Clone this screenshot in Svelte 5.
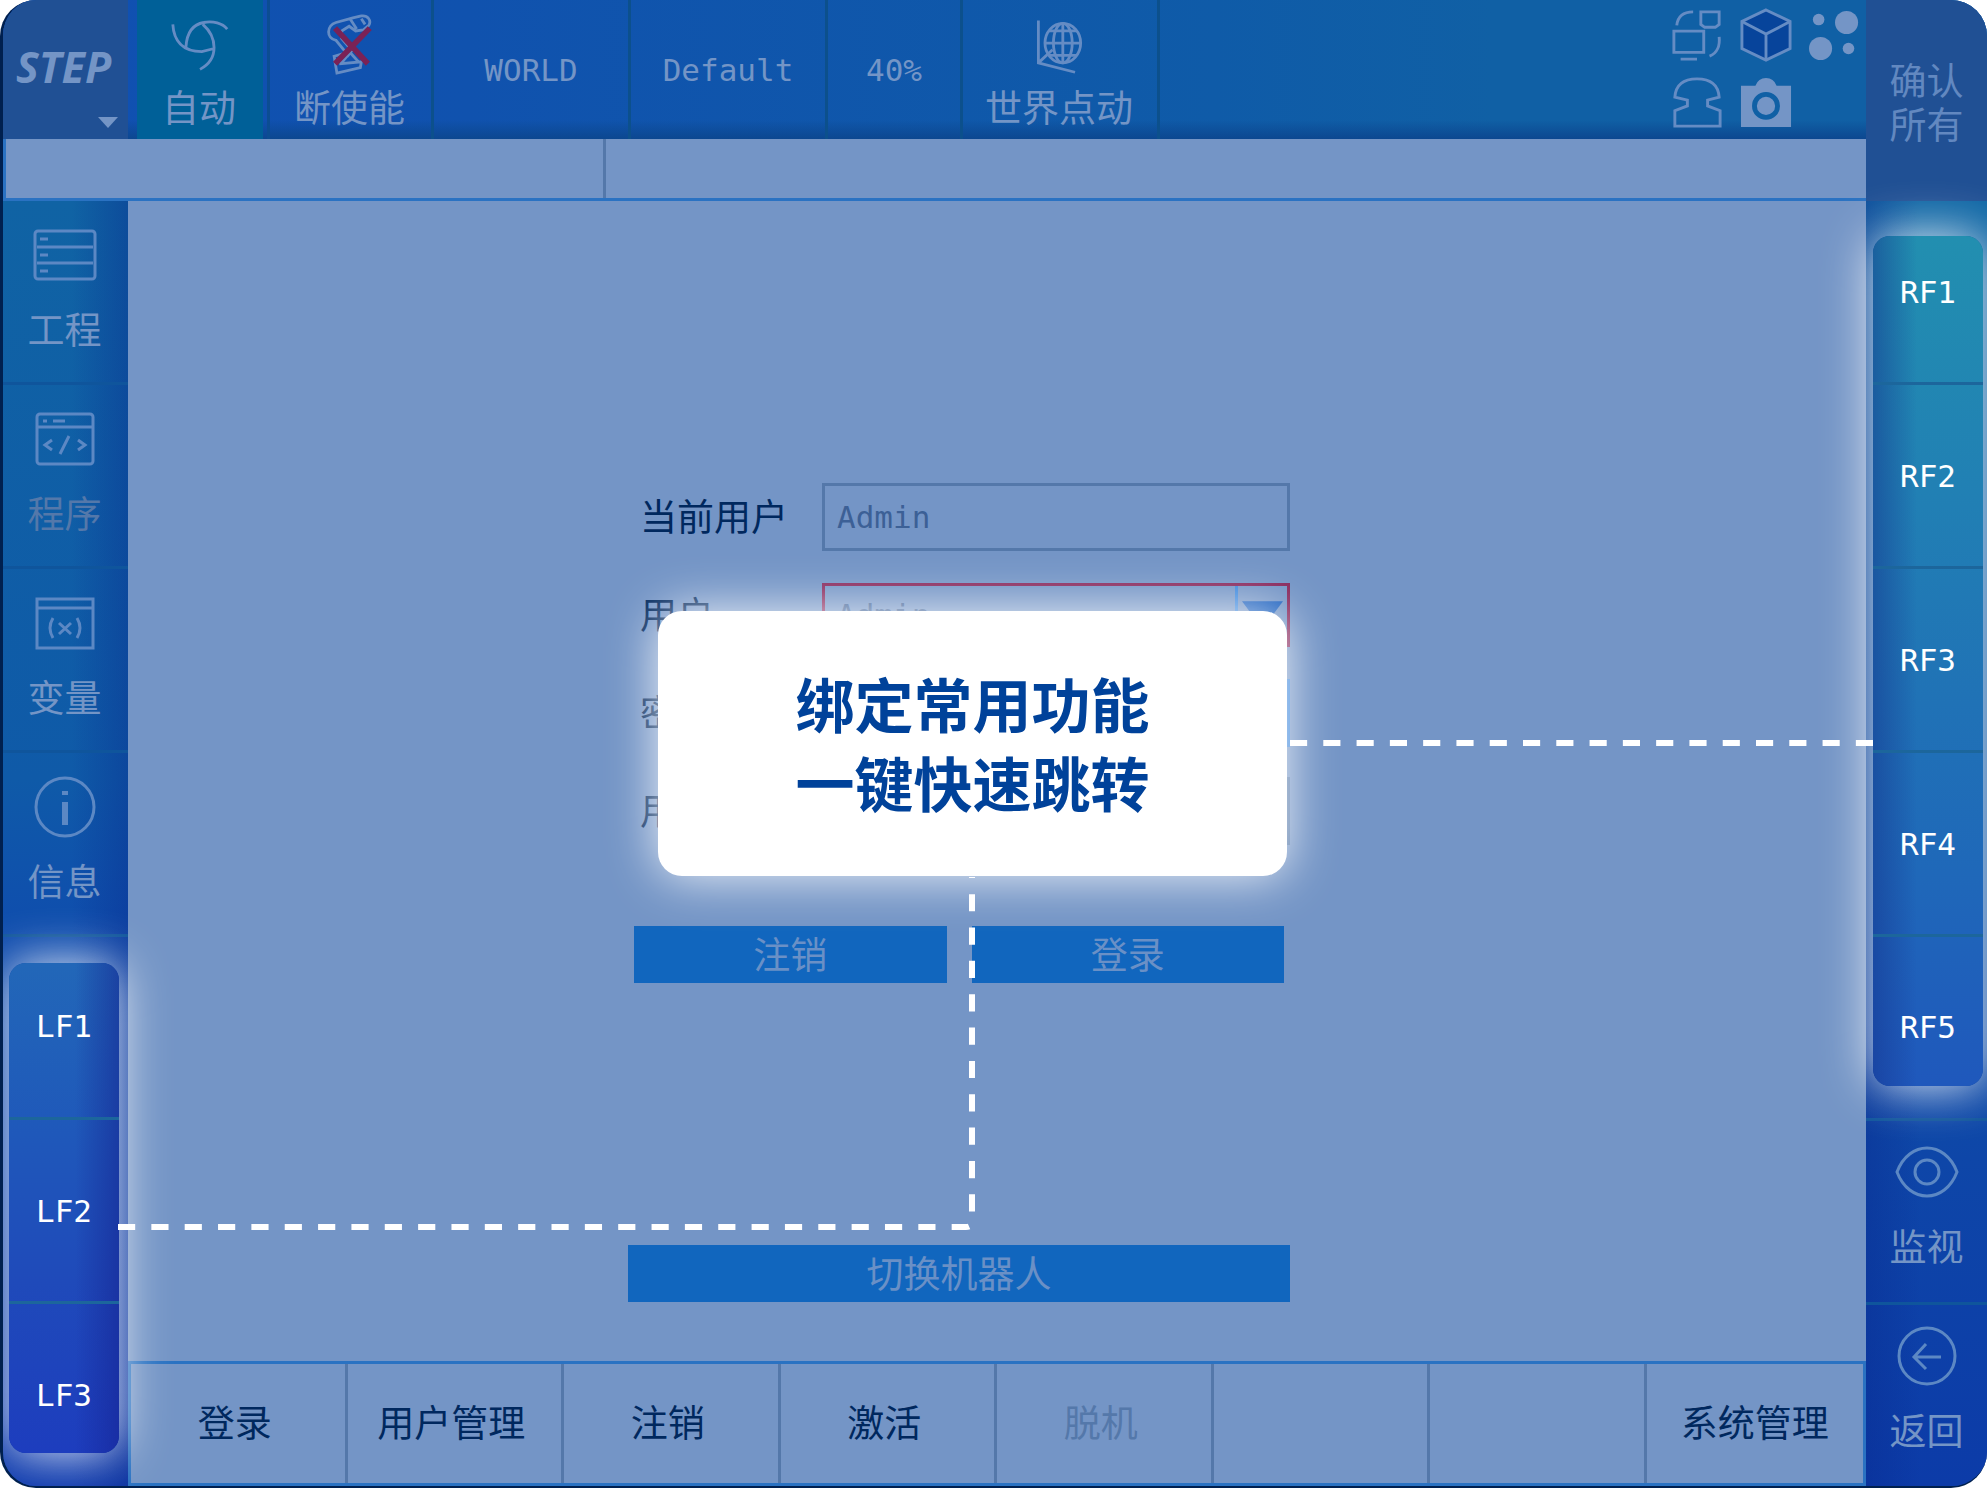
<!-- App.svelte -->
<script>
  /**
   * Left navigation entries
   */
  const navItems = [
    { id: 'project', label: '工程' },
    { id: 'program', label: '程序', dim: true },
    { id: 'variable', label: '变量' },
    { id: 'info', label: '信息' }
  ];

  const leftKeys = ['LF1', 'LF2', 'LF3'];
  const rightKeys = ['RF1', 'RF2', 'RF3', 'RF4', 'RF5'];

  /**
   * Bottom function bar, empty labels are unused slots
   */
  const tabs = [
    { label: '登录' },
    { label: '用户管理' },
    { label: '注销' },
    { label: '激活' },
    { label: '脱机', disabled: true },
    { label: '' },
    { label: '' },
    { label: '系统管理' }
  ];

  let user = $state('Admin');
</script>

<div class="pendant">
  <header class="topbar">
    <button class="logo" aria-label="STEP">
      <span>STEP</span>
      <svg class="caret" viewBox="0 0 20 11" aria-hidden="true"><path d="M0 0h20L10 11z" /></svg>
    </button>
    <div class="mode">
      <button class="tool auto">
        <svg viewBox="0 -3 64 60" aria-hidden="true">
          <path d="M3 5C4 22 13 34 34 34L46 31M17 29C18 14 24 5 36 3C46 1 56 4 61 10M35 5C50 18 53 42 32 53" />
        </svg>
        <span>自动</span>
      </button>
    </div>
    <button class="tool enable">
      <svg viewBox="0 0 64 64" aria-hidden="true">
        <path d="M16 27C5 25 6 11 16 8L34 3L43 1C50 0 54 6 51 11L45 16L37 17L30 12L22 17V25L33 38L29 43zM31 4L38 15M43 4L47 10M14 44L21 42V52L43 50L42 56L17 62zM21 52L31 40L40 50" />
        <path class="cross" d="M15 14L50 52M52 14L15 52" />
      </svg>
      <span>断使能</span>
    </button>
    <button class="tool wide">WORLD</button>
    <button class="tool wide">Default</button>
    <button class="tool speed">40%</button>
    <button class="tool wide">
      <svg viewBox="-2 -4 60 66" aria-hidden="true">
        <path d="M5 3V48L44 58M5 48L20 34" />
        <ellipse cx="31" cy="27" rx="19" ry="21" />
        <ellipse cx="31" cy="27" rx="10" ry="21" />
        <path d="M31 6V48M12 27H50M16 14H46M16 40H46" />
      </svg>
      <span>世界点动</span>
    </button>
    <div class="status-icons">
      <svg viewBox="0 0 54 56" aria-hidden="true">
        <path d="M3 24H34V46H3zM10 53H27M31 4H50V17L46 20H35L31 17zM6 18C7 9 13 4 23 4M50 30C51 39 48 47 40 50" />
      </svg>
      <svg viewBox="0 0 54 56" aria-hidden="true">
        <path class="cube" d="M27 2L52 14V42L27 54L2 42V14z" />
        <path d="M2 14L27 27L52 14M27 27V54" />
      </svg>
      <svg class="solid" viewBox="0 0 54 56" aria-hidden="true">
        <circle cx="10" cy="12" r="6" />
        <circle cx="39" cy="15" r="12" />
        <circle cx="12" cy="42" r="12" />
        <circle cx="41" cy="42" r="6" />
      </svg>
      <svg viewBox="0 0 54 56" aria-hidden="true">
        <path d="M4 52V36L17 31V25L4 22C5 8 14 3 27 3S49 8 50 22L38 25V31L51 36V52z" />
      </svg>
      <svg class="solid" viewBox="0 0 54 56" aria-hidden="true">
        <path d="M1 10H16Q19 2 27 2T38 10H53V53H1z" />
        <circle class="lens" cx="27" cy="31" r="12" />
      </svg>
    </div>
  </header>

  <div class="messages">
    <div class="code"></div>
    <div class="text"></div>
  </div>

  <div class="body">
    <nav class="side left">
      {#each navItems as item}
        <button class="nav" class:dim={item.dim}>
          <svg viewBox="0 0 64 64" aria-hidden="true">
            {#if item.id === 'project'}
              <rect x="2" y="8" width="60" height="48" rx="3" />
              <path d="M4 24H60M4 40H60M7 16H15M7 32H15M7 48H15" />
            {:else if item.id === 'program'}
              <rect x="4" y="7" width="56" height="50" rx="3" />
              <path d="M4 20H60M10 14H14M20 14H32M19 33L12 38L19 43M45 33L52 38L45 43M36 29L27 47" />
            {:else if item.id === 'variable'}
              <path d="M4 8H60V57H4zM4 17H60M20 27Q14 37 20 47M44 27Q50 37 44 47M26 32L38 43M38 32L26 43" />
            {:else}
              <circle cx="32" cy="32" r="29" />
              <path class="thick" d="M32 16V20M32 27V50" />
            {/if}
          </svg>
          <span>{item.label}</span>
        </button>
      {/each}
      <div class="keys">
        {#each leftKeys as key}
          <button>{key}</button>
        {/each}
      </div>
    </nav>

    <main>
      <form onsubmit={(e) => e.preventDefault()}>
        <div class="fields">
          <label for="current">当前用户</label>
          <input id="current" value="Admin" readonly />
          <label for="user">用户</label>
          <div class="dropdown">
            <select id="user" bind:value={user}>
              <option>Admin</option>
            </select>
            <svg viewBox="0 0 42 28" aria-hidden="true"><path d="M0 0H42L21 28z" /></svg>
          </div>
          <label for="password">密码</label>
          <input id="password" class="active" type="password" />
          <label for="level">用户等级</label>
          <input id="level" readonly />
        </div>
        <div class="actions">
          <button class="primary">注销</button>
          <button class="primary">登录</button>
        </div>
        <button class="primary switch">切换机器人</button>
      </form>

      <div class="tabs">
        {#each tabs as tab}
          <button disabled={tab.disabled}>{tab.label}</button>
        {/each}
      </div>
    </main>
  </div>

  <aside class="side right">
    <button class="confirm">确认<br />所有</button>
    <div class="keys">
      {#each rightKeys as key}
        <button>{key}</button>
      {/each}
    </div>
    <button class="nav">
      <svg viewBox="0 0 64 64" aria-hidden="true">
        <path d="M2 32C14 0 50 0 62 32C50 64 14 64 2 32z" />
        <circle cx="32" cy="32" r="12" />
      </svg>
      <span>监视</span>
    </button>
    <button class="nav">
      <svg viewBox="0 0 64 64" aria-hidden="true">
        <circle cx="32" cy="32" r="28" />
        <path d="M46 33H19M31 20L19 33L31 45" />
      </svg>
      <span>返回</span>
    </button>
  </aside>

  <!-- connectors between the callout and the highlighted keys -->
  <svg class="links" viewBox="0 0 1987 1488" preserveAspectRatio="none" aria-hidden="true">
    <path pathLength="578" d="M1873 743H1290" />
    <path pathLength="1189" d="M118 1227H966Q972 1227 972 1221V877" />
  </svg>

  <section class="callout">
    <p>绑定常用功能</p>
    <p>一键快速跳转</p>
  </section>
</div>

<style>
  :global(body) {
    margin: 0;
    background: #fff;
  }

  .pendant {
    --surface: #7495c6;
    --line: #2a72c2;
    --ink: #00285e;
    position: relative;
    box-sizing: border-box;
    display: grid;
    grid-template-columns: minmax(0, 1fr) 121px;
    grid-template-rows: 139px 62px 1fr;
    min-height: 100vh;
    border-left: 3px solid #00204f;
    border-bottom: 2px solid #00204f;
    border-radius: 36px;
    overflow: hidden;
    background: #0e45a8;
    color: var(--surface);
    font-family: 'DejaVu Sans Mono', 'Noto Sans CJK SC', monospace;
    font-size: 31px;
    line-height: 44px;
  }

  button,
  input,
  select {
    box-sizing: border-box;
    margin: 0;
    padding: 0;
    border: none;
    border-radius: 0;
    background: transparent;
    color: inherit;
    font: inherit;
  }

  button {
    cursor: pointer;
  }

  svg {
    display: block;
    fill: none;
    stroke: currentColor;
    stroke-width: 3;
  }

  /* Chinese captions share one size */
  .tool span,
  .nav span,
  .confirm,
  .primary,
  .tabs button,
  label {
    font-family: 'Noto Sans CJK SC', sans-serif;
    font-size: 37px;
  }

  /* Top toolbar */
  .topbar {
    display: flex;
    background:
      linear-gradient(transparent 120px, #0c4790 139px),
      linear-gradient(90deg, #1050b2 0, #1052ae 25%, #0f5ba8 65%, #1060a5 80%);
  }

  .logo {
    display: flex;
    flex-direction: column;
    align-items: center;
    width: 125px;
    padding: 45px 4px 0 0;
    background: #205094;
    font-family: 'Noto Sans', sans-serif;
    font-size: 43px;
    font-style: italic;
    font-weight: 700;
  }

  .logo .caret {
    width: 20px;
    height: 11px;
    margin: 28px 6px 0 auto;
    fill: currentColor;
    stroke: none;
  }

  .mode {
    display: flex;
    padding: 0 4px 0 9px;
    border-right: 3px solid #0c4d92;
  }

  .tool {
    display: flex;
    flex-direction: column;
    align-items: center;
    justify-content: center;
    border-right: 3px solid #0c508c;
  }

  .tool svg {
    width: 60px;
    height: 62px;
    margin-top: 14px;
    stroke: #658cc4;
  }

  .tool span {
    margin: 8px 2px auto 0;
  }

  .tool .cross {
    stroke: #7a2256;
    stroke-width: 6;
  }

  .auto {
    width: 126px;
    border: none;
    background: #006098;
  }

  .enable {
    width: 164px;
  }

  .wide {
    width: 197px;
  }

  .speed {
    width: 135px;
  }

  .status-icons {
    display: grid;
    grid-template-columns: repeat(3, 52px);
    align-content: start;
    gap: 12px 17px;
    margin: 7px 5px 0 auto;
  }

  .status-icons svg {
    width: 52px;
    height: 56px;
    stroke: #658cc4;
  }

  .status-icons .solid {
    fill: currentColor;
    stroke: none;
  }

  .status-icons .cube {
    fill: #07449b;
  }

  .status-icons .lens {
    stroke: #1060a5;
    stroke-width: 5;
  }

  /* Message strip */
  .messages {
    display: flex;
    border-left: 3px solid var(--line);
    border-bottom: 3px solid var(--line);
    background: var(--surface);
  }

  .messages .code {
    width: 597px;
    border-right: 3px solid #5478aa;
  }

  .messages .text {
    flex: 1;
  }

  .body {
    display: flex;
    min-width: 0;
  }

  /* Side columns */
  .side {
    display: flex;
    flex-direction: column;
  }

  .side.left {
    flex: none;
    width: 125px;
    background:
      linear-gradient(90deg, transparent 55%, rgba(8, 40, 140, 0.38)),
      linear-gradient(#1063a4, #0f5aa8 45%, #0f4cae 58%, #1048b0 75%, #0e3aae);
  }

  .side.right {
    grid-column: 2;
    grid-row: 1 / 4;
    background:
      linear-gradient(90deg, rgba(8, 40, 140, 0.38), transparent 45%),
      linear-gradient(#1168a6 14%, #0f55a6 60%, #0e46a8 78%, #0c3ba8);
  }

  .nav {
    display: flex;
    flex-direction: column;
    align-items: center;
    gap: 19px;
    height: 184px;
    padding: 22px 2px 0 0;
    border-bottom: 3px solid #0f559c;
  }

  .right .nav {
    padding: 19px 0 0;
    border-top: 3px solid #0f559c;
    border-bottom: none;
  }

  .nav svg {
    width: 64px;
    height: 64px;
    stroke: #5c88c4;
  }

  .nav .thick {
    stroke-width: 6;
  }

  .nav.dim span {
    color: #5478aa;
  }

  .confirm {
    height: 201px;
    background: #205094;
    color: #6288c0;
  }

  /* Highlighted function keys */
  .keys {
    position: relative;
    z-index: 1;
    display: flex;
    flex-direction: column;
    border-radius: 17px;
    overflow: hidden;
    box-shadow: 0 0 50px rgba(255, 255, 255, 0.9);
    color: #fff;
  }

  .keys button {
    height: 184px;
    border-bottom: 3px solid #1c669c;
  }

  .keys button:last-child {
    height: 149px;
    border-bottom: none;
  }

  .left .keys {
    margin: 26px 9px 33px 6px;
    background:
      linear-gradient(90deg, transparent 60%, rgba(20, 30, 140, 0.5)),
      linear-gradient(#2267b8, #1f58ba 35%, #1f4aba 65%, #1d3dbe);
  }

  .left .keys button:first-child {
    height: 157px;
    padding-bottom: 28px;
  }

  .left .keys button:last-child {
    padding-top: 32px;
  }

  .right .keys {
    margin: 35px 4px 32px 7px;
    background:
      linear-gradient(90deg, rgba(20, 50, 140, 0.5), transparent 40%),
      linear-gradient(#228fb0, #2180b4 30%, #2072b6 55%, #1f68b9 75%, #1f58bc);
  }

  .right .keys button:first-child {
    height: 149px;
    padding-bottom: 34px;
  }

  .right .keys button:last-child {
    padding-top: 30px;
  }

  /* Login page */
  main {
    display: flex;
    flex: 1;
    flex-direction: column;
    min-width: 0;
    background: var(--surface);
  }

  form {
    display: flex;
    flex: 1;
    flex-direction: column;
    box-sizing: border-box;
    width: 662px;
    margin-left: 500px;
    padding-top: 282px;
  }

  .fields {
    display: grid;
    grid-template-columns: 182px 468px;
    grid-auto-rows: 68px;
    row-gap: 30px;
    align-items: center;
    padding-left: 12px;
  }

  label {
    padding-bottom: 4px;
    color: var(--ink);
  }

  input,
  select {
    width: 100%;
    height: 68px;
    padding: 0 12px;
    border: 3px solid #5478aa;
    color: #3c6096;
    outline: none;
  }

  input.active {
    border-color: #3a86dc;
  }

  .dropdown {
    position: relative;
  }

  select {
    display: block;
    height: 64px;
    appearance: none;
    border-color: #87285c;
  }

  .dropdown svg {
    position: absolute;
    top: 3px;
    right: 3px;
    box-sizing: border-box;
    width: 52px;
    height: 58px;
    padding: 0 4px;
    border-left: 3px solid #3a86dc;
    fill: #1a5fbe;
    stroke: none;
    pointer-events: none;
  }

  .actions {
    display: grid;
    grid-template-columns: 1fr 1fr;
    gap: 25px;
    margin: 81px 6px 0;
  }

  .primary {
    height: 57px;
    padding-bottom: 4px;
    background: #1166be;
    color: #6a90c6;
  }

  .switch {
    margin-top: 262px;
  }

  .tabs {
    display: grid;
    grid-template-columns: repeat(8, minmax(0, 1fr));
    height: 125px;
    box-sizing: border-box;
    border: 3px solid var(--line);
  }

  .tabs button {
    padding: 0 6px 5px 0;
    border-right: 3px solid #5478aa;
    color: var(--ink);
  }

  .tabs button:last-child {
    padding-right: 0;
    border-right: none;
  }

  .tabs button:disabled {
    color: #5478aa;
  }

  /* Guide overlay */
  .links {
    position: absolute;
    z-index: 2;
    top: 0;
    left: -3px;
    width: calc(100% + 3px);
    height: calc(100% + 2px);
    stroke: #fff;
    stroke-width: 6;
    stroke-dasharray: 17 16;
    pointer-events: none;
  }

  .callout {
    position: absolute;
    z-index: 3;
    top: 611px;
    left: 655px;
    box-sizing: border-box;
    width: 629px;
    height: 265px;
    padding: 52px 0;
    border-radius: 24px;
    background: #fff;
    box-shadow: 0 0 50px rgba(255, 255, 255, 0.9);
    color: #00429a;
    font-family: 'Noto Sans CJK SC', sans-serif;
    font-size: 59px;
    font-weight: 700;
    line-height: 79px;
    text-align: center;
  }

  .callout p {
    margin: 0;
  }
</style>
